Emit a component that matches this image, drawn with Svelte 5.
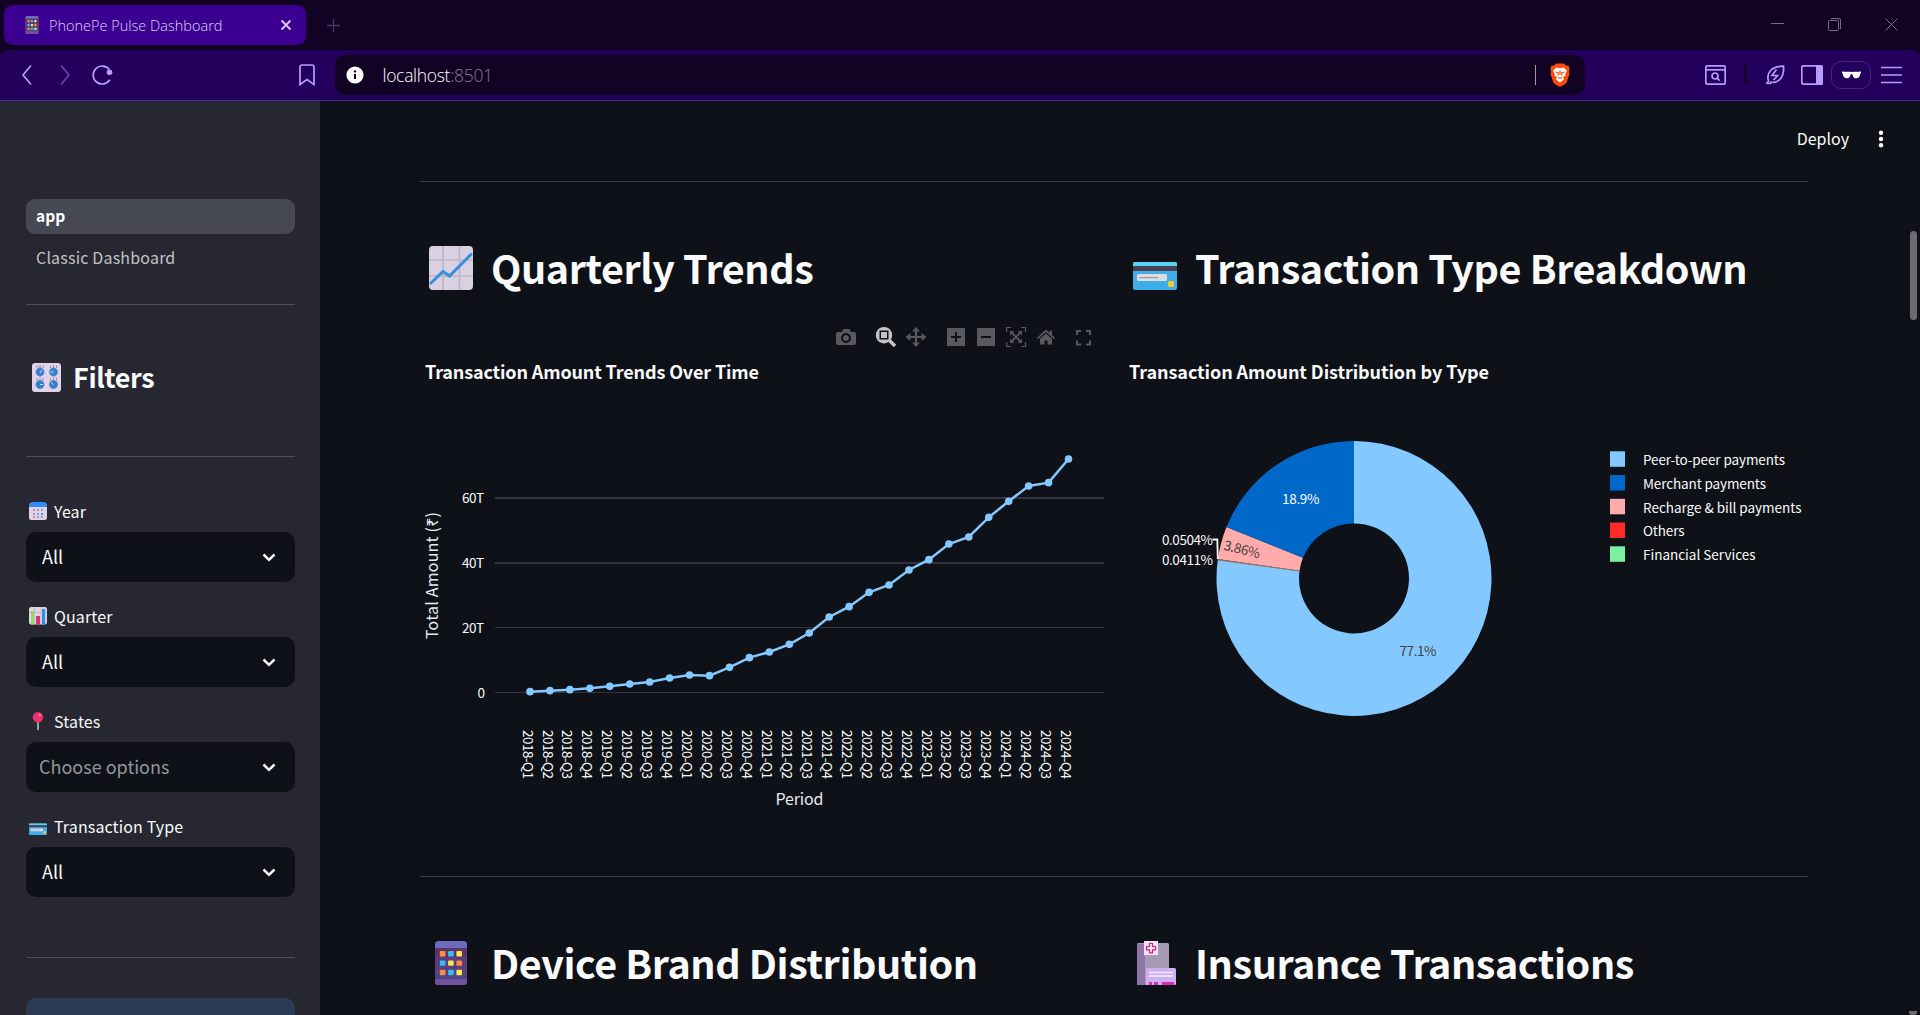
<script>
  const crop = [785,782,779,775,769,762,756,744,735,737,712,683,666,643,609,561,530,487,465,420,389,342,321,262,214,168,158,87];
  const points = crop.map((v, i) => ({
    x: 530 + i * 19.945,
    y: 430 + v / 3,
    label: `${2018 + Math.floor(i / 4)}-Q${(i % 4) + 1}`
  }));
  const line = points.map((p) => `${p.x},${p.y}`).join(' ');

  const cx = 1354, cy = 578.4, R = 137.5, r = 55;
  const shares = [
    { v: 77.1485, c: '#83c9ff' },
    { v: 0.0411, c: '#7defa1' },
    { v: 0.0504, c: '#ff2b2b' },
    { v: 3.86, c: '#ffabab' },
    { v: 18.9, c: '#0068c9' }
  ];
  const at = (rad, f) => {
    const a = f * 2 * Math.PI;
    return `${(cx + rad * Math.sin(a)).toFixed(2)} ${(cy - rad * Math.cos(a)).toFixed(2)}`;
  };
  let acc = 0;
  const slices = shares.map((s) => {
    const a = acc;
    acc += s.v / 100;
    const big = s.v > 50 ? 1 : 0;
    return { c: s.c, d: `M${at(R, a)}A${R} ${R} 0 ${big} 1 ${at(R, acc)}L${at(r, acc)}A${r} ${r} 0 ${big} 0 ${at(r, a)}Z` };
  });

  const legend = [
    { t: 'Peer-to-peer payments', c: '#83c9ff', w: 142 },
    { t: 'Merchant payments', c: '#0068c9', w: 123 },
    { t: 'Recharge & bill payments', c: '#ffabab', w: 158.5 },
    { t: 'Others', c: '#ff2b2b', w: 41.5 },
    { t: 'Financial Services', c: '#7defa1', w: 112.5 }
  ];
  const ticks = [
    { t: '60T', y: 498, h: 2, w: 22 },
    { t: '40T', y: 563, h: 2, w: 22 },
    { t: '20T', y: 627.5, h: 1, w: 22 },
    { t: '0', y: 692.5, h: 1, w: 6.5 }
  ];
  const filters = [
    { icon: 'calendar', label: 'Year', value: 'All' },
    { icon: 'bars', label: 'Quarter', value: 'All' },
    { icon: 'pin', label: 'States', value: 'Choose options', empty: true },
    { icon: 'card', label: 'Transaction Type', value: 'All' }
  ];
</script>

{#snippet phone()}
  <svg class="emoji" viewBox="0 0 44 44">
    <rect x="6" width="32" height="44" rx="3.5" fill="#6c6bbd" />
    <rect x="6" y="7" width="32" height="31" fill="#5a3d7d" />
    <rect x="6" y="7" width="32" height="9" fill="#603469" />
    <rect x="6" y="30" width="32" height="8" fill="#4c4585" />
    <path d="M6 38h32v2.500a3.500 3.500 0 0 1-3.500 3.500h-25a3.500 3.500 0 0 1-3.500-3.500z" fill="#74509c" />
    {#each ['#ff8c41', '#35bdf6', '#ffe84e', '#35bdf6', '#ffe84e', '#ff8c41', '#ff8c41', '#35bdf6', '#ffe84e'] as c, i}
      <rect x={10.8 + (i % 3) * 8.3} y={10 + Math.floor(i / 3) * 9.4} width="5.6" height="5.4" rx="1" fill={c} />
    {/each}
  </svg>
{/snippet}

{#snippet card()}
  <svg class="emoji" viewBox="0 0 44 44">
    <rect y="16" width="44" height="28" rx="2" fill="#3eaee9" />
    <path d="M0 20v-2a2 2 0 0 1 2-2h40a2 2 0 0 1 2 2v2z" fill="#53d6f4" />
    <rect y="20" width="44" height="5" fill="#4b4050" />
    <rect x="4" y="28" width="30" height="7" rx="1.500" fill="#dedce3" />
    <rect x="6" y="31" width="19" height="1.200" fill="#999" />
    <rect x="35" y="35" width="6" height="6" rx="1.500" fill="#f6c635" />
  </svg>
{/snippet}

{#snippet chevron()}
  <svg class="chev" viewBox="0 0 14 9"><path d="M1.500 1.500L7 6.800l5.500-5.300" /></svg>
{/snippet}

<div class="window">
  <header class="tabs">
    <div class="tab">
      <span class="fav">{@render phone()}</span>
      <span class="tabname">PhonePe Pulse Dashboard</span>
      <svg class="tabx" viewBox="0 0 12 12"><path d="M1.500 1.500l9 9M10.500 1.500l-9 9" /></svg>
    </div>
    <svg class="plus" viewBox="0 0 13 13"><path d="M6.500 0v13M0 6.500h13" /></svg>
    <div class="winctl">
      <svg width="14" height="14" viewBox="0 0 14 14"><path d="M0 5.500h13" /></svg>
      <svg width="14" height="14" viewBox="0 0 14 14"><rect x=".5" y="2.500" width="10" height="10" rx="1" /><path d="M3 .5h8a1.500 1.500 0 0 1 1.500 1.500v9" /></svg>
      <svg width="14" height="14" viewBox="0 0 14 14"><path d="M.5.5l12 12M12.500.5l-12 12" /></svg>
    </div>
  </header>

  <div class="toolbar">
    <div class="nav">
      <svg width="12" height="22" viewBox="0 0 12 22"><path d="M10 1.500L2 11l8 9.500" /></svg>
      <svg class="dim" width="12" height="22" viewBox="0 0 12 22"><path d="M2 1.500L10 11l-8 9.500" /></svg>
      <svg class="reload" width="22" height="22" viewBox="0 0 22 22"><path d="M18.300 5.500a9 9 0 1 0 .5 10.300" /><circle cx="18.500" cy="8.200" r="2.800" class="dot" /></svg>
    </div>
    <svg class="mark" width="16" height="22" viewBox="0 0 16 22"><path d="M1 3a2 2 0 0 1 2-2h10a2 2 0 0 1 2 2v17.500l-7-5-7 5z" /></svg>
    <div class="url">
      <svg width="18" height="18" viewBox="0 0 18 18"><circle cx="9" cy="9" r="8.600" fill="#fff" /><path d="M9 8v5" stroke="#120325" stroke-width="2" /><circle cx="9" cy="5.400" r="1.200" fill="#120325" /></svg>
      <span class="addr">localhost<i>:8501</i></span>
      <span class="vr"></span>
      <svg class="brave" width="20" height="24" viewBox="0 0 20 24">
        <path d="M6 .5h8l2 2.300 2.300-.3 1.500 3.200-1 2.600.7 2.500-2.600 8.200Q16.200 21 10 23.700 3.800 21 3.100 19L.5 10.800l.7-2.500-1-2.600 1.500-3.200 2.300.3z" fill="#fb4b0c" />
        <path d="M6 4.500l4 .8 4-.8 3 3.600-1.800 2.300.3 2-2.800 2.200 1.500 1.600L10 19.500l-4.200-3.300 1.500-1.600-2.800-2.200.3-2L3 8.100z" fill="#fff" />
        <path d="M5.500 9l3 .8-.7 2.700M14.500 9l-3 .8.700 2.700M10 7v5M8 14.500l2 1 2-1" fill="none" stroke="#fb4b0c" stroke-width="1.100" />
      </svg>
    </div>
    <div class="tools">
      <svg width="21" height="20" viewBox="0 0 21 20"><rect x=".8" y=".8" width="19.400" height="18.400" rx="1.500" /><path d="M1 4.800h19" /><circle cx="10" cy="11" r="3" /><path d="M12 13l2.600 2.600" /></svg>
      <span class="bar"></span>
      <svg width="20" height="20" viewBox="0 0 20 20"><path d="M1.500 19l2-3C1 8 6 1.500 18.500 1.200 19.500 12 14 18.500 4.800 17.200M3 18.500h3" /><path d="M11.500 4.500L7 10.500h5.500L8.500 15" /></svg>
      <svg width="22" height="20" viewBox="0 0 22 20"><rect x=".8" y=".8" width="20" height="18.400" rx="1.500" /><path d="M15 0h5.500a1.500 1.500 0 0 1 1.500 1.500v17a1.500 1.500 0 0 1-1.500 1.500H15z" fill="#b79cff" stroke="none" /></svg>
      <span class="private"><svg width="19" height="8" viewBox="0 0 19 8"><path d="M0 .3l1.500.4h6.800q1.200.6 2.400 0h6.800L19 .3v2l-.8.4c-.3 6-7 6-7.800.7q-.9-1-1.800 0c-.8 5.300-7.500 5.300-7.800-.7L0 2.300z" /></svg></span>
      <svg width="21" height="18" viewBox="0 0 21 18"><path d="M0 1.500h21M0 9h21M0 16.500h21" /></svg>
    </div>
  </div>

  <div class="page">
    <aside>
      <nav>
        <b>app</b>
        <span>Classic Dashboard</span>
      </nav>
      <hr />
      <h2>
        <svg class="emoji knobs" viewBox="0 0 29 29">
          <rect width="29" height="29" rx="3" fill="#e0d3ea" />
          {#each [[8, 9], [21.500, 9], [8, 21.500], [21.500, 21.500]] as [x, y], i}
            <path d="M{x - 3} {y - 4}v-2.500M{x} {y - 4}v-3M{x + 3} {y - 4}v-2.500" stroke="#918a99" />
            <circle cx={x} cy={y} r="4.200" fill="#2f80d0" stroke="#7f94b5" stroke-width=".6" />
            <path d={i === 0 ? `M${x} ${y + 1}l2-3` : i === 3 ? `M${x} ${y}l-2.500-2` : i === 1 ? `M${x - 3} ${y}h3` : `M${x} ${y}h3`} stroke="#cfe4fa" />
          {/each}
        </svg>
        <span>Filters</span>
      </h2>
      <hr />
      <div class="filters">
        {#each filters as f}
          <div class="field">
            <div class="label">
              {#if f.icon === 'calendar'}
                <svg class="emoji" viewBox="0 0 18 18"><rect y="1" width="18" height="17" rx="2.500" fill="#e0d3ea" /><path d="M0 5V3.500Q0 0 4 0h10q4 0 4 3.500V5z" fill="#2f8df5" />{#each [4, 8, 12] as x}{#each [7, 11, 14] as y}<rect {x} {y} width="2" height="2" fill={x === 12 && y === 11 ? '#2f9df5' : '#a59cae'} />{/each}{/each}</svg>
              {:else if f.icon === 'bars'}
                <svg class="emoji" viewBox="0 0 18 18"><rect width="18" height="17.500" rx="2" fill="#dcd5e2" /><path d="M0 5.500h18M5.500 0v17M12 0v17" stroke="#bdb6c3" stroke-width=".7" /><rect x="2" y="4" width="3.200" height="13.500" fill="#8fdc67" /><rect x="7" y="9" width="4" height="8.500" fill="#d8346f" /><rect x="13" y="2" width="3.200" height="15.500" fill="#2f8fe0" /></svg>
              {:else if f.icon === 'pin'}
                <svg class="emoji" viewBox="0 0 18 18"><rect x="8" y="8" width="2" height="10" fill="#a19aa8" /><circle cx="9" cy="5.200" r="5.200" fill="#f0306b" /><rect x="9.500" y="2.300" width="2.500" height="1.800" rx=".8" fill="#ffb3cb" /></svg>
              {:else}
                {@render card()}
              {/if}
              <span>{f.label}</span>
            </div>
            <div class="select" class:empty={f.empty}><span>{f.value}</span>{@render chevron()}</div>
          </div>
        {/each}
      </div>
      <hr />
      <div class="button"></div>
    </aside>

    <main>
      <div class="deploy"><span>Deploy</span><svg width="6" height="18" viewBox="0 0 6 18"><circle cx="3" cy="2.700" r="2.200" /><circle cx="3" cy="9" r="2.200" /><circle cx="3" cy="15.200" r="2.200" /></svg></div>
      <hr />
      <div class="cols">
        <section>
          <h1>
            <svg class="emoji" viewBox="0 0 44 44">
              <rect width="44" height="44" rx="4" fill="#d9d0e2" />
              <path d="M14 0v44M30.500 0v44M0 14h44M0 30h44" stroke="#bdb7c3" stroke-width="1.700" />
              <path d="M1 38L14 25.500l6.500 4.500L43 7.500" fill="none" stroke="#3490dc" stroke-width="3" />
            </svg>
            <span class="t1">Quarterly Trends</span>
          </h1>
          <svg class="chart" viewBox="420 315 684 530">
            <g class="mode">
              <path fill-rule="evenodd" d="M838 332h4l1.500-3h6l1.500 3h3q2 0 2 2v9q0 2-2 2h-16q-2 0-2-2v-9q0-2 2-2zM846 333a5 5 0 1 0 .01 0zM846 335a3 3 0 1 1-.01 0z" />
              <g class="on"><path fill-rule="evenodd" d="M884 327a8.200 8.200 0 1 0 .01 0zM879.500 330.500h9v9h-9z" /><path d="M881 332h6v6h-6z" /><path d="M889 340l6 6" stroke-width="3.500" /></g>
              <path d="M916 327l4 4.500h-2.900v4.400h4.400V333l5 4-5 4v-2.900h-4.400v4.400h2.900l-4 4.500-4-4.500h2.900v-4.400h-4.400v2.900l-5-4 5-4v2.900h4.400v-4.400H912z" />
              <path fill-rule="evenodd" d="M947 328h18v18h-18zM955 332v4h-4v2h4v4h2v-4h4v-2h-4v-4z" />
              <path fill-rule="evenodd" d="M977 328h18v18h-18zM981 336v2h10v-2z" />
              <g class="ln"><path d="M1006.700 332v-4.500h4.500M1021 327.500h4.500v4.500M1025.500 342v4.500h-4.500M1011.200 346.500h-4.500V342" /><path d="M1011.500 332.500l9 9M1020.500 332.500l-9 9" stroke-width="1.800" /></g>
              <path d="M1010 331h4.500l-4.500 4.500zM1022 331v4.500l-4.500-4.500zM1022 343h-4.500l4.500-4.500zM1010 343v-4.500l4.500 4.500z" />
              <path d="M1046 329.500l3.800 3.500v-2.500h2.200v4.500l3 2.700-1.200 1.300-7.800-7-7.800 7-1.200-1.300z" /><path d="M1046 333.500l6 5.300v5.700h-4.500v-4h-3v4h-4.500v-5.700z" />
              <g class="ln fs"><path d="M1077 335v-4h4M1086 331h4v4M1090 340.500v4h-4M1081 344.500h-4v-4" /></g>
            </g>
            <text class="ct" x="425" y="379" textLength="334">Transaction Amount Trends Over Time</text>
            {#each ticks as t}
              <path d="M495 {t.y}h609" stroke="#31333f" stroke-width={t.h} />
              <text class="sm" x={484 - t.w} y={t.y + 5.300} textLength={t.w}>{t.t}</text>
            {/each}
            <polyline points={line} fill="none" stroke="#83c9ff" stroke-width="2.500" />
            {#each points as p}
              <circle cx={p.x} cy={p.y} r="3.800" fill="#83c9ff" />
              <text class="sm" transform="translate({p.x - 7.400} 730) rotate(90)" textLength="49">{p.label}</text>
            {/each}
            <text class="md" transform="translate(437.500 639) rotate(-90)" textLength="127">Total Amount (₹)</text>
            <text class="md" x="775.500" y="805" textLength="48">Period</text>
          </svg>
        </section>
        <section>
          <h1>{@render card()}<span class="t2">Transaction Type Breakdown</span></h1>
          <svg class="chart" viewBox="1124 315 684 530">
            <text class="ct" x="1129" y="379" textLength="360">Transaction Amount Distribution by Type</text>
            {#each slices as s}<path d={s.d} fill={s.c} />{/each}
            <path d="M{at(r, 0.7715)}L{at(R, 0.7715)}" stroke="#8d7470" stroke-width="1" />
            <path d="M1212.500 539.500h4.800l.5 19.500" fill="none" stroke="#fafafa" stroke-width="1.800" />
            <text class="sm" x="1282" y="504" textLength="37.500">18.9%</text>
            <text class="sm dark" x="1399.500" y="656" textLength="37">77.1%</text>
            <text class="sm dark" transform="translate(1223 549.500) rotate(14)" textLength="37">3.86%</text>
            <text class="sm" x="1162" y="545" textLength="51">0.0504%</text>
            <text class="sm" x="1162" y="565" textLength="51">0.0411%</text>
            {#each legend as l, i}
              <rect x="1610" y={451.300 + i * 23.750} width="15" height="15.500" fill={l.c} />
              <text class="sm" x="1643" y={465 + i * 23.750} textLength={l.w}>{l.t}</text>
            {/each}
          </svg>
        </section>
      </div>
      <hr />
      <div class="cols second">
        <h1>{@render phone()}<span class="t3">Device Brand Distribution</span></h1>
        <h1>
          <svg class="emoji" viewBox="0 0 44 44">
            <rect x="4" y="2" width="32" height="42" rx="1.500" fill="#a79bb3" />
            <rect x="4" y="3" width="8" height="41" fill="#8f76a8" />
            <rect x="13" y="27" width="30" height="17" rx="1.500" fill="#cdb0ef" />
            <path d="M16 31.500h24M16 35h24" stroke="#f3eaff" stroke-width="1.600" />
            <path d="M16 41h3v3h-3zM21 41h4v3h-4zM29 41h12v3H29z" fill="#d82bb0" />
            <rect x="11" width="14" height="14" fill="#eee4f7" />
            <path d="M16.500 2.500h3v3h3v3.300h-3v3h-3v-3h-3V5.500h3z" fill="#f6ecfb" stroke="#d81b72" stroke-width="1.200" />
          </svg>
          <span class="t4">Insurance Transactions</span>
        </h1>
      </div>
      <div class="scroll"></div>
      <div class="arrow"></div>
    </main>
  </div>
</div>

<style>
  :global(body) { margin: 0; background: #0e1117; overflow: hidden; }
  .window { width: 1920px; height: 1015px; overflow: hidden; display: flex; flex-direction: column; background: #120325; color: #fafafa; font-family: "Noto Sans CJK SC", "Noto Sans", sans-serif; }
  svg { display: block; flex: none; }
  hr { border: 0; height: 1px; margin: 0; background: #4c4d56; }

  .tabs { height: 50px; flex: none; display: flex; align-items: flex-start; }
  .tab { box-sizing: border-box; width: 302px; height: 40px; margin: 5px 0 0 4px; border-radius: 9px; background: #3b0091; display: flex; align-items: center; padding: 0 14px 0 19px; }
  .fav { width: 18px; --s: 18px; }
  .tabname { flex: 1; margin-left: 8px; font: 300 14.500px "Open Sans", sans-serif; color: #ddd0f5; white-space: nowrap; }
  .tabx { width: 12px; height: 12px; stroke: #d9c9ff; stroke-width: 1.800; }
  .plus { width: 13px; height: 13px; margin: 19px 0 0 21px; stroke: #49346a; stroke-width: 1.300; }
  .winctl { margin: 18px 21px 0 auto; display: flex; gap: 43px; }
  .winctl svg { fill: none; stroke: #776b85; stroke-width: 1; }

  .toolbar { height: 50px; flex: none; box-sizing: content-box; border-bottom: 1px solid #4b2a8c; background: #22005c; border-radius: 8px 8px 0 0; display: flex; align-items: center; }
  .toolbar svg { fill: none; stroke: #b79cff; stroke-width: 1.700; }
  .nav { display: flex; gap: 26px; margin-left: 21px; width: 278px; }
  .nav .dim { opacity: .45; }
  .nav .reload { margin-left: -6px; }
  .nav .dot { fill: #b79cff; stroke: none; }
  .url { box-sizing: border-box; width: 1250px; height: 40px; margin-left: 20px; border-radius: 10px; background: #120325; display: flex; align-items: center; padding: 0 15px 0 11px; }
  .url svg { stroke: none; }
  .addr { flex: 1; margin: -1px 0 0 18.500px; font: 300 17.500px "Open Sans", sans-serif; letter-spacing: -.3px; color: #fff; }
  .addr i { font-style: normal; color: #857b93; }
  .vr { width: 1px; height: 20px; background: #9d95a8; margin-right: 14px; }
  .tools { flex: 1; display: flex; align-items: center; margin-left: 120px; }
  .bar { width: 3px; height: 20px; background: #14032d; margin: 0 18px 0 18px; }
  .tools .bar + svg { margin-right: 16px; }
  .private { box-sizing: border-box; width: 40px; height: 28px; border: 1px solid #42237e; border-radius: 10px; margin: 0 10px 0 8px; display: flex; align-items: center; justify-content: center; }
  .private svg { fill: #fff; stroke: none; }

  .page { flex: 1; display: flex; min-height: 0; background: #0e1117; }
  .emoji { width: var(--s); height: var(--s); }

  aside { box-sizing: border-box; width: 320px; flex: none; background: #262730; padding: 98px 25px 0 26px; --s: 18px; overflow: hidden; }
  nav { display: flex; flex-direction: column; gap: 7px; font-size: 16px; line-height: 33px; height: 105px; }
  nav b, nav span { height: 35px; padding-left: 10px; border-radius: 9px; }
  nav b { background: #464853; color: #fff; font-size: 15.500px; }
  nav span { color: #c3c3c6; letter-spacing: .18px; }
  h2 { margin: 0; height: 151px; display: flex; align-items: center; font-size: 27px; font-weight: 700; letter-spacing: -.4px; }
  .knobs { width: 29px; height: 29px; margin: -7px 12px 0 6px; }
  h2 span { line-height: 40px; margin-top: -7px; }
  .filters { height: 500px; box-sizing: border-box; padding-top: 40px; display: flex; flex-direction: column; gap: 15px; }
  .field { height: 90px; }
  .label { box-sizing: border-box; height: 35px; padding-bottom: 7px; display: flex; align-items: center; padding-left: 3px; gap: 7px; font-size: 16px; letter-spacing: .12px; }
  .label span { line-height: 28px; }
  .select { box-sizing: border-box; height: 50px; border-radius: 10px; background: #0e1117; display: flex; align-items: center; justify-content: space-between; padding: 0 19px 0 16px; font-size: 18px; }
  .select span { margin-top: -3px; }
  .select.empty { padding-left: 13px; }
  .empty span { color: #94969a; }
  .chev { width: 14px; height: 9px; fill: none; stroke: #fafafa; stroke-width: 2.500; }
  .button { height: 50px; margin-top: 40px; border-radius: 10px; background: #2a3c55; }

  main { position: relative; flex: 1; box-sizing: border-box; padding: 0 112px 0 100px; --s: 44px; }
  main > hr { background: #3b3d42; }
  .deploy { box-sizing: border-box; height: 80px; margin-right: -76px; padding-bottom: 5px; display: flex; justify-content: flex-end; align-items: center; gap: 29px; font-size: 16px; }
  .deploy span { line-height: 24px; margin-top: -1px; }
  .deploy svg { fill: #fff; }
  .cols { display: grid; grid-template-columns: 684px 684px; gap: 20px; height: 694px; }
  h1 { margin: 0; height: 133px; box-sizing: border-box; padding: 64px 0 0 9px; display: flex; align-items: flex-start; gap: 18px; font-size: 39.500px; font-weight: 700; letter-spacing: -.42px; white-space: nowrap; }
  h1 span { line-height: 44px; margin-top: -1px; }
  .chart { width: 684px; height: 530px; overflow: visible; }
  .mode { fill: #595a5e; }
  .on { fill: #c2c3c5; stroke: none; }
  .on path[stroke-width] { stroke: #c2c3c5; }
  .ln { fill: none; stroke: #595a5e; stroke-width: 1.200; }
  .fs { stroke-width: 2; }
  text { fill: #fafafa; }
  .ct { font-size: 18px; font-weight: 700; }
  .sm { font-size: 13.500px; }
  .md { font-size: 16px; fill: #e6eaf1; }
  .dark { fill: #444; }
  .scroll { position: absolute; right: 3px; top: 130px; width: 7px; height: 89px; border-radius: 4px; background: #6b6c70; }
  .arrow { position: absolute; right: 3px; bottom: 0; width: 8px; height: 4px; background: #6b6c70; border-radius: 0 0 3px 3px; }
</style>
